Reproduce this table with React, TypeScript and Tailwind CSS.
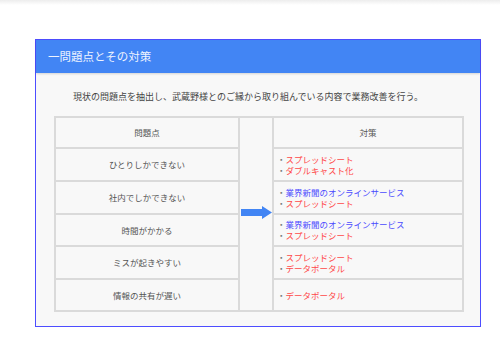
import React from "react";

type Item = { t: string; c: "r" | "b" };

const rows: { p: string; items: Item[] }[] = [
  { p: "ひとりしかできない", items: [{ t: "スプレッドシート", c: "r" }, { t: "ダブルキャスト化", c: "r" }] },
  { p: "社内でしかできない", items: [{ t: "業界新聞のオンラインサービス", c: "b" }, { t: "スプレッドシート", c: "r" }] },
  { p: "時間がかかる", items: [{ t: "業界新聞のオンラインサービス", c: "b" }, { t: "スプレッドシート", c: "r" }] },
  { p: "ミスが起きやすい", items: [{ t: "スプレッドシート", c: "r" }, { t: "データポータル", c: "r" }] },
  { p: "情報の共有が遅い", items: [{ t: "データポータル", c: "r" }] },
];

const heights = ["h-[33px]", "h-[33px]", "h-[32px]", "h-[33px]", "h-[30px]"];

export default function App() {
  return (
    <div
      className="w-[500px] h-[353px] bg-white relative overflow-hidden"
      style={{ fontFamily: '"Noto Sans CJK JP", "Noto Sans", sans-serif' }}
    >
      <div className="h-[5px] bg-gradient-to-b from-[#ededed] to-white" />
      <div className="pt-[34px] pl-[35px]">
        <div className="w-[446px] h-[288px] border border-[#4d4dff] bg-[#f8f8f8] flex flex-col">
          <div className="h-[33px] bg-[#4285f4] flex items-center pl-[12px] text-[11.5px] text-[#eef3ff] shadow-[0_1px_2px_rgba(0,0,0,0.15)]">
            一問題点とその対策
          </div>
          <div className="pt-[18px] pl-[37px] text-[9px] leading-[12px] text-[#444]">
            現状の問題点を抽出し、武蔵野様とのご縁から取り組んでいる内容で業務改善を行う。
          </div>
          <div className="mt-[13px] ml-[18px] w-[410px] border-2 border-[#dadada] flex text-[8.5px] text-[#555] leading-[11px]">
            <div className="w-[182px] flex flex-col">
              <div className="h-[31px] flex items-center justify-center border-b-2 border-[#dadada]">問題点</div>
              {rows.map((r, i) => (
                <div
                  key={i}
                  className={`${heights[i]} flex items-center justify-center ${i < rows.length - 1 ? "border-b-2 border-[#dadada]" : ""}`}
                >
                  {r.p}
                </div>
              ))}
            </div>
            <div className="w-[36px] border-l-2 border-r-2 border-[#dadada] flex items-center justify-center">
              <svg width="31" height="13" viewBox="0 0 31 13" className="-mt-[4px]">
                <polygon points="0,3 21,3 21,0 31,6.5 21,13 21,10 0,10" fill="#4285f4" />
              </svg>
            </div>
            <div className="flex-1 flex flex-col">
              <div className="h-[31px] flex items-center justify-center border-b-2 border-[#dadada]">対策</div>
              {rows.map((r, i) => (
                <div
                  key={i}
                  className={`${heights[i]} flex flex-col justify-center pl-[3px] ${i < rows.length - 1 ? "border-b-2 border-[#dadada]" : ""}`}
                >
                  {r.items.map((it, j) => (
                    <div key={j} className="flex">
                      <span className="text-[#777]">・</span>
                      <span className={it.c === "r" ? "text-[#ff4848]" : "text-[#4b4bff]"}>{it.t}</span>
                    </div>
                  ))}
                </div>
              ))}
            </div>
          </div>
        </div>
      </div>
    </div>
  );
}
